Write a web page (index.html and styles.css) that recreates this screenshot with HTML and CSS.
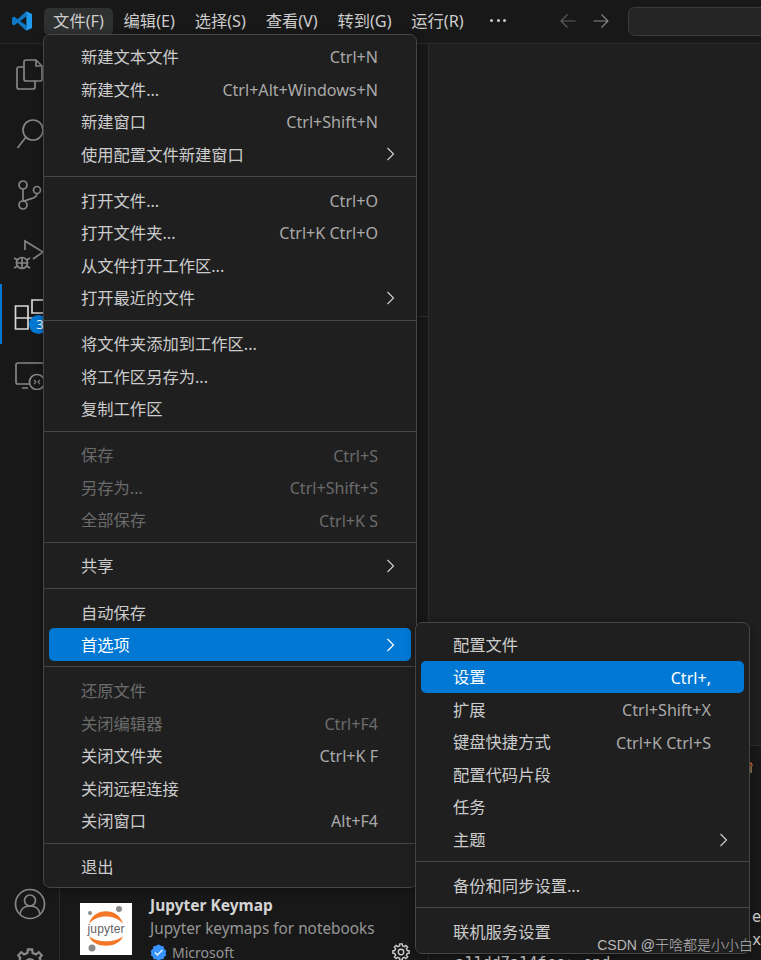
FILE: index.html
```html
<!DOCTYPE html>
<html lang="zh-CN">
<head>
<meta charset="utf-8">
<title>VS Code 文件菜单</title>
<link rel="stylesheet" href="styles.css">
</head>
<body>
<div class="app">
  <header class="titlebar">
    <svg class="logo" viewBox="0 0 100 100"><path class="logo-dark" d="M71 1 28 41 10 28 0 34v32l10 6 18-13 43 40 1-27L40 50l32-22z"/><path class="logo-light" d="M71 1 100 15v70L71 99l1-27V28z"/></svg>
    <nav class="menubar">
      <span class="menubar-item is-open">文件(F)</span>
      <span class="menubar-item">编辑(E)</span>
      <span class="menubar-item">选择(S)</span>
      <span class="menubar-item">查看(V)</span>
      <span class="menubar-item">转到(G)</span>
      <span class="menubar-item">运行(R)</span>
      <span class="menubar-more"><i></i><i></i><i></i></span>
    </nav>
    <div class="nav-arrows">
      <svg class="arrow dim" viewBox="0 0 16 16"><path d="M15.5 8H1M7.5 1.500 1 8l6.500 6.500"/></svg>
      <svg class="arrow" viewBox="0 0 16 16"><path d="M.5 8H15M8.500 1.500 15 8l-6.500 6.500"/></svg>
    </div>
    <div class="command-center"></div>
  </header>

  <div class="workbench">
    <aside class="activitybar">
      <div class="activity-cell">
        <svg class="activity-icon" viewBox="0 0 32 32"><path d="M12 2h10l6 6v13a2 2 0 0 1-2 2H12a2 2 0 0 1-2-2V4a2 2 0 0 1 2-2zM22 2v6h6M10 9H5a2 2 0 0 0-2 2v18a2 2 0 0 0 2 2h14a2 2 0 0 0 2-2v-6"/></svg>
      </div>
      <div class="activity-cell">
        <svg class="activity-icon" viewBox="0 0 32 32"><circle cx="19" cy="12" r="10"/><path d="M12 19 3.500 30"/></svg>
      </div>
      <div class="activity-cell">
        <svg class="activity-icon" viewBox="0 0 32 32"><circle cx="9" cy="7" r="4"/><circle cx="23" cy="12" r="3.500"/><circle cx="9" cy="27" r="4"/><path d="M9 11v12M23 15.500c0 5-7 5-14 8"/></svg>
      </div>
      <div class="activity-cell">
        <svg class="activity-icon" viewBox="0 0 32 32"><path d="M11 12V3l18 11-10 7"/><ellipse cx="8" cy="25" rx="5.500" ry="5.500"/><path d="M2.500 25h11M8 19.500V30M0 20l3.500 2M16 20l-3.500 2M0 30l3.500-2M16 30l-3.500-2"/></svg>
      </div>
      <div class="activity-cell is-active">
        <svg class="activity-icon bright" viewBox="0 0 32 32"><path d="M1.500 8H14v23H1.500zM1.500 20H14M14 20h9M18 2h13v13H18z"/></svg>
        <span class="badge">3</span>
      </div>
      <div class="activity-cell">
        <svg class="activity-icon" viewBox="0 0 32 32"><path d="M27 26H4a2 2 0 0 1-2-2V7a2 2 0 0 1 2-2h26v18M8 30h6"/><circle class="cover" cx="23" cy="24" r="7.500"/><path class="thin" d="m20 26 2-2-2-2M26 22l-2 2 2 2"/></svg>
      </div>
      <div class="activity-spacer"></div>
      <div class="activity-cell">
        <svg class="activity-icon" viewBox="0 0 32 32"><circle cx="16" cy="16" r="14.500"/><circle cx="16" cy="12.500" r="5.500"/><path d="M6 26c1-6 5-8 10-8s9 2 10 8"/></svg>
      </div>
      <div class="activity-cell">
        <svg class="activity-icon" viewBox="-12 -12 24 24"><polygon points="-1.910,-8.280 -1.630,-10.880 1.630,-10.880 1.910,-8.280 4.500,-7.210 6.540,-8.850 8.850,-6.540 7.210,-4.500 8.280,-1.910 10.880,-1.630 10.880,1.630 8.280,1.910 7.210,4.500 8.850,6.540 6.540,8.850 4.500,7.210 1.910,8.280 1.630,10.880 -1.630,10.880 -1.910,8.280 -4.500,7.210 -6.540,8.850 -8.850,6.540 -7.210,4.500 -8.280,1.910 -10.880,1.630 -10.880,-1.630 -8.280,-1.910 -7.210,-4.500 -8.850,-6.540 -6.540,-8.850 -4.500,-7.210"/><circle r="3.600"/></svg>
      </div>
    </aside>

    <section class="sidebar">
      <div class="sidebar-section"></div>
      <article class="extension">
        <svg class="jupyter" viewBox="0 0 52 52">
          <rect class="jp-bg" width="52" height="52"/>
          <path class="jp-arc" d="M9 21C13 4 39 4 43 21C36 11 16 11 9 21Z"/>
          <path class="jp-arc" d="M9 33C13 46 39 46 43 33C36 40 16 40 9 33Z"/>
          <circle class="jp-dot" cx="39" cy="6" r="3"/>
          <circle class="jp-dot" cx="10" cy="10" r="2"/>
          <circle class="jp-dot" cx="12" cy="45" r="3.500"/>
          <text class="jp-text" x="7.500" y="29.500" textLength="37">jupyter</text>
        </svg>
        <div class="ext-info">
          <div class="ext-name">Jupyter Keymap</div>
          <div class="ext-desc">Jupyter keymaps for notebooks</div>
          <div class="ext-publisher">
            <svg class="verified" viewBox="-12 -12 24 24"><polygon class="verified-shape" points="-3,-9.500 0,-11.500 3,-9.500 7,-9 8,-5 11,-2.500 10,1 11,4 8,6 7,9.500 3.500,9.500 0,11.500 -3.500,9.500 -7,9.500 -8,6 -11,4 -10,1 -11,-2.500 -8,-5 -7,-9"/><path class="verified-check" d="m-5 0 3.500 3.500L5.500-3.500"/></svg>
            <span>Microsoft</span>
          </div>
        </div>
        <svg class="ext-gear" viewBox="-12 -12 24 24"><polygon points="-1.910,-8.280 -1.630,-10.880 1.630,-10.880 1.910,-8.280 4.500,-7.210 6.540,-8.850 8.850,-6.540 7.210,-4.500 8.280,-1.910 10.880,-1.630 10.880,1.630 8.280,1.910 7.210,4.500 8.850,6.540 6.540,8.850 4.500,7.210 1.910,8.280 1.630,10.880 -1.630,10.880 -1.910,8.280 -4.500,7.210 -6.540,8.850 -8.850,6.540 -7.210,4.500 -8.280,1.910 -10.880,1.630 -10.880,-1.630 -8.280,-1.910 -7.210,-4.500 -8.850,-6.540 -6.540,-8.850 -4.500,-7.210"/><circle r="3.600"/></svg>
      </article>
    </section>

    <main class="main">
      <div class="editor"></div>
      <div class="panel">
        <svg class="panel-mark" viewBox="0 0 4 11"><path d="M2 4v7"/><path class="panel-mark-tip" d="M.5 4 2 1l1.500 3"/></svg>
        <div class="term-line term-end term-first">e</div>
        <div class="term-line term-end">x</div>
        <div class="term-line term-last">a11dd7a14fcc: end</div>
      </div>
    </main>
  </div>

  <div class="menu menu-file">
    <div class="item"><span class="label">新建文本文件</span><span class="key">Ctrl+N</span><span class="slot"></span></div>
    <div class="item"><span class="label">新建文件...</span><span class="key">Ctrl+Alt+Windows+N</span><span class="slot"></span></div>
    <div class="item"><span class="label">新建窗口</span><span class="key">Ctrl+Shift+N</span><span class="slot"></span></div>
    <div class="item"><span class="label">使用配置文件新建窗口</span><span class="slot"><svg class="chevron" viewBox="0 0 10 16"><path d="m1.500 2 6 6-6 6"/></svg></span></div>
    <div class="sep"></div>
    <div class="item"><span class="label">打开文件...</span><span class="key">Ctrl+O</span><span class="slot"></span></div>
    <div class="item"><span class="label">打开文件夹...</span><span class="key">Ctrl+K Ctrl+O</span><span class="slot"></span></div>
    <div class="item"><span class="label">从文件打开工作区...</span><span class="slot"></span></div>
    <div class="item"><span class="label">打开最近的文件</span><span class="slot"><svg class="chevron" viewBox="0 0 10 16"><path d="m1.500 2 6 6-6 6"/></svg></span></div>
    <div class="sep"></div>
    <div class="item"><span class="label">将文件夹添加到工作区...</span><span class="slot"></span></div>
    <div class="item"><span class="label">将工作区另存为...</span><span class="slot"></span></div>
    <div class="item"><span class="label">复制工作区</span><span class="slot"></span></div>
    <div class="sep"></div>
    <div class="item is-disabled"><span class="label">保存</span><span class="key">Ctrl+S</span><span class="slot"></span></div>
    <div class="item is-disabled"><span class="label">另存为...</span><span class="key">Ctrl+Shift+S</span><span class="slot"></span></div>
    <div class="item is-disabled"><span class="label">全部保存</span><span class="key">Ctrl+K S</span><span class="slot"></span></div>
    <div class="sep"></div>
    <div class="item"><span class="label">共享</span><span class="slot"><svg class="chevron" viewBox="0 0 10 16"><path d="m1.500 2 6 6-6 6"/></svg></span></div>
    <div class="sep"></div>
    <div class="item"><span class="label">自动保存</span><span class="slot"></span></div>
    <div class="item is-selected"><span class="label">首选项</span><span class="slot"><svg class="chevron" viewBox="0 0 10 16"><path d="m1.500 2 6 6-6 6"/></svg></span></div>
    <div class="sep"></div>
    <div class="item is-disabled"><span class="label">还原文件</span><span class="slot"></span></div>
    <div class="item is-disabled"><span class="label">关闭编辑器</span><span class="key">Ctrl+F4</span><span class="slot"></span></div>
    <div class="item"><span class="label">关闭文件夹</span><span class="key">Ctrl+K F</span><span class="slot"></span></div>
    <div class="item"><span class="label">关闭远程连接</span><span class="slot"></span></div>
    <div class="item"><span class="label">关闭窗口</span><span class="key">Alt+F4</span><span class="slot"></span></div>
    <div class="sep"></div>
    <div class="item"><span class="label">退出</span><span class="slot"></span></div>
  </div>

  <div class="menu menu-prefs">
    <div class="item"><span class="label">配置文件</span><span class="slot"></span></div>
    <div class="item is-selected"><span class="label">设置</span><span class="key">Ctrl+,</span><span class="slot"></span></div>
    <div class="item"><span class="label">扩展</span><span class="key">Ctrl+Shift+X</span><span class="slot"></span></div>
    <div class="item"><span class="label">键盘快捷方式</span><span class="key">Ctrl+K Ctrl+S</span><span class="slot"></span></div>
    <div class="item"><span class="label">配置代码片段</span><span class="slot"></span></div>
    <div class="item"><span class="label">任务</span><span class="slot"></span></div>
    <div class="item"><span class="label">主题</span><span class="slot"><svg class="chevron" viewBox="0 0 10 16"><path d="m1.500 2 6 6-6 6"/></svg></span></div>
    <div class="sep"></div>
    <div class="item"><span class="label">备份和同步设置...</span><span class="slot"></span></div>
    <div class="sep"></div>
    <div class="item"><span class="label">联机服务设置</span><span class="slot"></span></div>
  </div>

  <div class="watermark">CSDN @干啥都是小小白</div>
</div>
</body>
</html>
```

FILE: styles.css
```css
* { box-sizing: border-box; }

html, body { margin: 0; padding: 0; background: #181818; }

.app {
  position: relative;
  width: 761px;
  height: 960px;
  overflow: hidden;
  display: flex;
  flex-direction: column;
  background: #181818;
  color: #cccccc;
  font-family: "Noto Sans", "Noto Sans CJK SC", sans-serif;
  font-size: 15.5px;
}

/* title bar */
.titlebar {
  flex: none;
  height: 44px;
  display: flex;
  align-items: center;
  border-bottom: 1px solid #2b2b2b;
  padding: 0 0 1px 12px;
}

.logo { flex: none; width: 20px; height: 20px; margin-right: 12px; }
.logo-dark { fill: #0e78c8; }
.logo-light { fill: #1f9cf0; }

.menubar { flex: none; display: flex; align-items: center; gap: 1.500px; }

.menubar-item {
  height: 27px;
  line-height: 26px;
  padding: 0 9.100px;
  border-radius: 5px;
  white-space: nowrap;
  font-family: "Noto Sans", "Noto Sans CJK SC", sans-serif;
  font-size: 16.300px;
}

.menubar-item.is-open { background: #2f3030; }

.menubar-more {
  display: flex;
  gap: 3.500px;
  margin-left: 16px;
  margin-bottom: 2px;
}

.menubar-more i {
  width: 3px;
  height: 3px;
  border-radius: 50%;
  background: #cccccc;
}

.nav-arrows {
  flex: none;
  display: flex;
  gap: 17px;
  margin-left: 54px;
}

.arrow {
  width: 16px;
  height: 16px;
  fill: none;
  stroke: #8a8a8a;
  stroke-width: 1.100;
}

.arrow.dim { stroke: #5f5f5f; }

.command-center {
  flex: none;
  width: 200px;
  height: 29px;
  margin-left: 19px;
  background: #242424;
  border: 1px solid #3a3a3a;
  border-radius: 7px;
}

/* workbench */
.workbench { flex: 1; min-height: 0; display: flex; }

.activitybar {
  flex: none;
  width: 60px;
  display: flex;
  flex-direction: column;
  overflow: hidden;
  border-right: 1px solid #2b2b2b;
}

.activity-cell {
  position: relative;
  flex: none;
  height: 60px;
  display: flex;
  align-items: center;
  justify-content: center;
  padding-left: 1px;
}

.activity-cell.is-active { box-shadow: inset 2px 0 0 #0078d4; }

.activity-spacer { flex: none; height: 470px; }

.activity-icon {
  width: 32px;
  height: 32px;
  fill: none;
  stroke: #868686;
  stroke-width: 1.700;
}

.activity-icon.bright { stroke: #d7d7d7; }
.activity-icon .cover { fill: #181818; }
.activity-icon .thin { stroke-width: 1.100; }

.badge {
  position: absolute;
  left: 29px;
  top: 31px;
  width: 19px;
  height: 19px;
  padding-left: 3px;
  border-radius: 50%;
  background: #0078d4;
  color: #ffffff;
  font-size: 13px;
  line-height: 19px;
  text-align: center;
}

/* side bar */
.sidebar {
  flex: none;
  width: 369px;
  display: flex;
  flex-direction: column;
  border-right: 1px solid #2b2b2b;
}

.sidebar-section {
  flex: none;
  height: 273px;
  border-bottom: 1px solid #2b2b2b;
}

.extension {
  flex: none;
  height: 66px;
  margin-top: auto;
  padding: 9px 0 0 20px;
  display: flex;
  align-items: flex-start;
}

.jupyter { flex: none; width: 52px; height: 52px; }
.jp-bg { fill: #ffffff; }
.jp-arc { fill: #f37726; }
.jp-dot { fill: #8a8a8a; }
.jp-text { font-family: "Liberation Sans", sans-serif; font-size: 12px; fill: #5f5f5f; }

.ext-info { flex: 1; min-width: 0; margin-left: 18px; }

.ext-name {
  height: 23px;
  line-height: 22px;
  margin-top: -9px;
  font-size: 15.500px;
  font-weight: 700;
  color: #d4d4d4;
  white-space: nowrap;
}

.ext-desc {
  height: 23px;
  line-height: 23px;
  font-size: 15.350px;
  color: #969696;
  white-space: nowrap;
}

.ext-publisher {
  display: flex;
  align-items: center;
  height: 24px;
  font-size: 14px;
  color: #969696;
  white-space: nowrap;
}

.verified { flex: none; width: 17px; height: 17px; margin-right: 5px; }
.verified-shape { fill: #3794ff; }
.verified-check { fill: none; stroke: #e6f0ff; stroke-width: 2; }

.ext-gear {
  flex: none;
  width: 18px;
  height: 18px;
  margin: 40px 18px 0 0;
  fill: none;
  stroke: #cccccc;
  stroke-width: 1.900;
}

/* editor and panel */
.main { flex: 1; min-width: 0; display: flex; flex-direction: column; }
.editor { flex: none; height: 701px; background: #1f1f1f; }

.panel {
  flex: 1;
  min-height: 0;
  display: flex;
  flex-direction: column;
  overflow: hidden;
  border-top: 1px solid #2b2b2b;
  background: #181818;
}

.panel-mark {
  flex: none;
  align-self: flex-end;
  width: 4px;
  height: 11px;
  margin: 16px 8px 0 0;
  fill: none;
  stroke: #c5a060;
  stroke-width: 1.300;
}

.panel-mark-tip { stroke: #c8643c; }

.term-line {
  flex: none;
  height: 23px;
  line-height: 23px;
  padding-left: 26px;
  font-family: "DejaVu Sans Mono", monospace;
  font-size: 15.200px;
  color: #cccccc;
  white-space: nowrap;
}

.term-end { padding: 0 0 0 323px; }
.term-first { margin-top: auto; }
.term-last { height: 8.500px; }

/* menus */
.menu {
  position: absolute;
  display: flex;
  flex-direction: column;
  padding: 5.500px 5px 6px;
  background: #1f1f1f;
  border: 1px solid #454545;
  border-radius: 7px;
  box-shadow: 0 2px 8px rgba(0, 0, 0, .36);
}

.menu-file { left: 43px; top: 34px; width: 374px; height: 854px; }
.menu-prefs { left: 415px; top: 622px; width: 335px; height: 332px; padding-top: 5.400px; }

.item {
  flex: none;
  height: 32.500px;
  display: flex;
  align-items: center;
  padding: 0 15px 0 32px;
  border-radius: 5px;
  white-space: nowrap;
}

.label {
  flex: 1;
  min-width: 0;
  margin-bottom: 1.400px;
  font-family: "Noto Sans", "Noto Sans CJK SC", sans-serif;
  font-size: 16.300px;
}

.key { flex: none; margin-top: 1px; color: #aaaaaa; font-size: 16.100px; }

.slot {
  flex: none;
  width: 18px;
  display: flex;
  justify-content: flex-end;
}

.chevron {
  width: 10px;
  height: 16px;
  fill: none;
  stroke: #cccccc;
  stroke-width: 1.200;
}

.sep {
  flex: none;
  height: 1px;
  margin: 5.500px -5px 7.100px;
  background: #454545;
}

.item.is-disabled .label,
.item.is-disabled .key { color: #6b6b6b; }

.item.is-selected { background: #0078d4; color: #ffffff; }
.item.is-selected .key { color: #ffffff; }
.item.is-selected .chevron { stroke: #ffffff; }

.watermark {
  position: absolute;
  right: 8px;
  bottom: 6px;
  font-family: "Liberation Sans", "Noto Sans CJK SC", sans-serif;
  font-size: 14px;
  font-weight: 300;
  line-height: 18px;
  color: #b9b9b9;
  white-space: nowrap;
}
```
